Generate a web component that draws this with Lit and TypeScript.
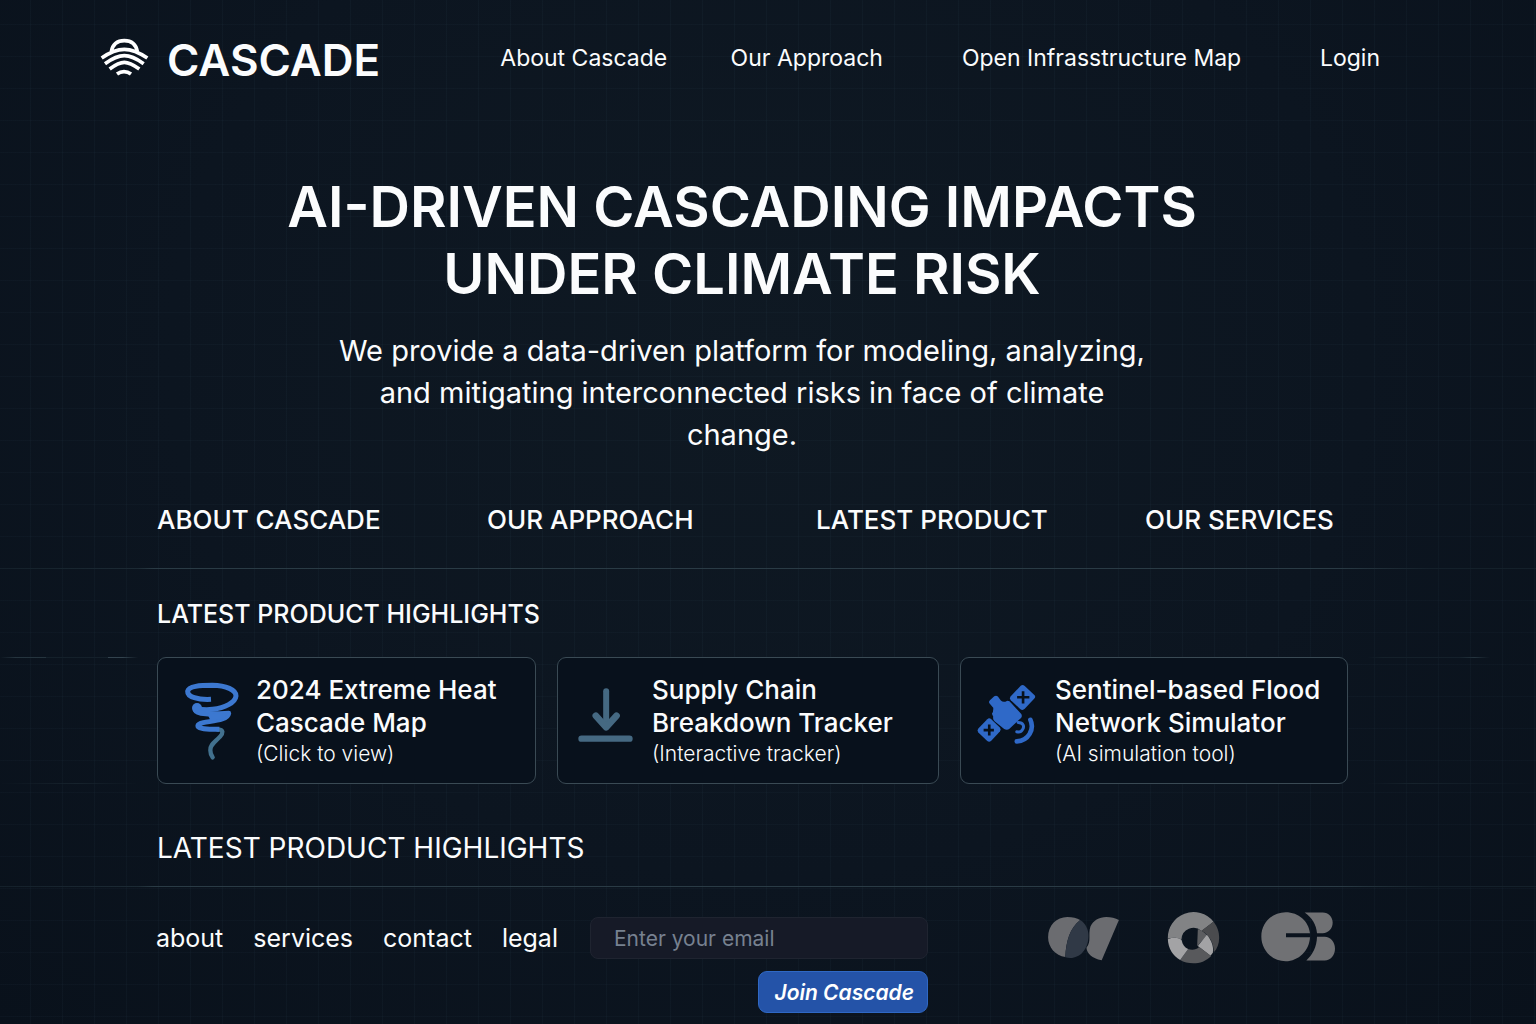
import { LitElement, html, css, svg } from "lit";
import { customElement } from "lit/decorators.js";

const brandMark = svg`
  <svg class="mark" viewBox="60 50 147 138" fill="none" stroke="#fff" stroke-width="11" aria-hidden="true">
    <path d="M94 94 C98 72 113 61 133 61 C153 61 168 72 172 94" />
    <path d="M65 113 C88 97 108 87 133 87 C158 87 178 97 202 113" />
    <path d="M75 130 C96 115 113 106 133 106 C153 106 170 115 191 130" />
    <path d="M89 146 C105 134 118 126 133 126 C148 126 161 134 178 146" />
    <path d="M111 161 C118 156 125 154 132 154 C139 154 146 156 153 161" />
  </svg>`;

const tornado = svg`
  <svg class="tornado" viewBox="70 60 168 240" fill="none" stroke-linejoin="round" aria-hidden="true">
    <path stroke="#42718e" stroke-width="13" stroke-linecap="round" d="M172 206 C190 204 187 218 178 227 C164 243 148 250 149 268 C149 278 152 284 156 289" />
    <g stroke="#3c78d0" stroke-width="15">
      <path d="M151 115 C112 117 80 108 81 91 C84 75 118 73 155 73 C196 74 226 86 226 105 C224 125 192 141 156 145 C136 147 118 145 108 142" />
      <path d="M103 146 C108 161 150 160 204 157 C201 177 160 179 128 185 C107 189 107 199 124 202 C140 206 158 204 176 205" />
    </g>
    <path fill="#3c78d0" d="M140 158 L204 157 L185 174 L150 180 Z" />
    <circle cx="109" cy="141" r="15" fill="#3c78d0" />
  </svg>`;

const download = svg`
  <svg class="download" viewBox="44 52 170 168" fill="none" stroke="#456982" stroke-linecap="round" aria-hidden="true">
    <path stroke-width="18" stroke-linejoin="round" d="M131 65 V170" />
    <path stroke-width="20" stroke-linejoin="round" d="M100 138 L131 173 L162 138" />
    <path stroke-width="19" d="M57 207 H201" />
  </svg>`;

const satellite = svg`
  <svg class="satellite" viewBox="46 42 182 184" fill="#2f69c8" aria-hidden="true">
    <path d="M180 47 Q186 43 192 48 L221 75 Q226 80 221 86 L192 117 Q186 123 179 118 L150 91 Q145 85 150 79 Z" />
    <path d="M79 148 Q85 143 91 148 L117 173 Q122 179 117 185 L91 213 Q85 219 79 214 L52 188 Q47 182 52 176 Z" />
    <path d="M86 101 Q82 96 87 91 L100 79 Q106 75 111 80 L120 92 Q128 99 138 93 Q146 92 151 99 L181 132 Q186 139 180 145 L146 177 Q139 182 130 178 L101 154 Q95 149 97 141 L93 132 Q98 125 97 114 Z" />
    <path d="M172 158 C188 158 192 170 185 180 C181 187 175 188 168 186" fill="none" stroke="#2f69c8" stroke-width="9" stroke-linecap="round" />
    <path d="M209 150 C222 178 204 213 168 215" fill="none" stroke="#2f69c8" stroke-width="14" stroke-linecap="round" />
    <path d="M187 64 V101 M169 82 H206 M85 164 V197 M68 181 H99" stroke="#08111c" stroke-width="8" />
  </svg>`;

const partnerWave = svg`
  <svg class="partner-wave" viewBox="52 44 218 136" role="img" aria-label="Partner one">
    <path fill="#6b6c70" d="M151 56 C120 80 108 120 106 168 C76 164 54 138 54 108 C54 72 80 47 112 47 C128 47 141 50 151 56 Z" />
    <path fill="#303946" d="M151 56 C166 66 176 82 176 104 C176 150 142 180 106 169 C108 120 120 80 151 56 Z" />
    <path fill="#6b6c70" d="M268 56 L216 178 C186 172 172 158 170 140 C186 120 174 100 182 76 C190 58 208 47 230 47 C244 47 257 50 268 56 Z" />
  </svg>`;

const partnerRing = svg`
  <svg class="partner-ring" viewBox="412 36 158 156" role="img" aria-label="Partner two">
    <path fill="#828385" d="M414 116 A77 77 0 0 1 551 65 L515 93 A36 36 0 0 0 455 118 C442 112 428 112 414 116 Z" />
    <path fill="#4a4b4e" d="M551 65 C563 80 568 95 568 114 C568 132 562 146 552 157 C552 130 540 105 515 92 Z" />
    <path fill="#5d5e61" d="M504 87 C515 92 526 98 531 106 L502 139 Z" />
    <path fill="#a3a3a5" d="M531 104 C545 120 552 140 549 158 L542 167 L504 138 Z" />
    <path fill="#58595c" d="M508 141 L544 168 C518 196 475 194 451 180 L475 147 C487 152 500 149 508 141 Z" />
    <path fill="#a3a3a5" d="M414 118 C428 112 442 112 455 119 C458 134 465 143 475 147 L451 180 C429 168 415 145 414 118 Z" />
  </svg>`;

const partnerBlocks = svg`
  <svg class="partner-blocks" viewBox="690 32 228 152" fill="#707174" role="img" aria-label="Partner three">
    <path d="M840 98 H768 V110 H840 C838 150 806 182 767 182 C726 182 694 149 694 108 C694 67 726 35 767 35 C806 35 836 62 840 98 Z" />
    <path d="M824 36 H878 C896 36 908 50 908 66 C908 84 896 98 878 98 H861 C859 72 846 52 824 36 Z" />
    <path d="M861 109 H884 C902 109 915 125 915 144 C915 164 902 180 884 180 H829 C848 162 860 140 861 109 Z" />
  </svg>`;

const products = [
  { icon: tornado, lines: ["2024 Extreme Heat", "Cascade Map"], note: "(Click to view)" },
  { icon: download, lines: ["Supply Chain", "Breakdown Tracker"], note: "(Interactive tracker)" },
  { icon: satellite, lines: ["Sentinel-based Flood", "Network Simulator"], note: "(AI simulation tool)" },
];

@customElement("app-root")
export class AppRoot extends LitElement {
  static styles = css`
    :host {
      display: block;
      min-height: 100vh;
      box-sizing: border-box;
      overflow: hidden;
      color: #fbfcfd;
      font-family: Inter, "Liberation Sans", sans-serif;
      background:
        repeating-linear-gradient(90deg, transparent 0 30px, rgba(100, 150, 175, 0.045) 30px 31px, transparent 31px 32px),
        repeating-linear-gradient(180deg, transparent 0 24px, rgba(100, 150, 175, 0.035) 24px 25px, transparent 25px 32px),
        radial-gradient(ellipse at 50% 35%, #0f1923 0%, #0c1520 55%, #09111b 100%);
    }
    a { color: inherit; text-decoration: none; white-space: nowrap; }
    h1, h2, h3, p { margin: 0; font-weight: 400; }
    svg { display: block; flex: none; }
    .header { display: flex; align-items: center; padding: 32px 156px 0 100px; }
    .brand { display: flex; align-items: center; gap: 18px; font-size: 44px; line-height: 56px; font-weight: 600; }
    .mark { width: 49px; height: 46px; }
    .nav { flex: 1; display: grid; grid-template-columns: 231fr 232fr 359fr 59fr; margin-left: 120px; padding-bottom: 4px; font-size: 23px; line-height: 32px; }
    .hero { padding: 86px 52px 0 0; text-align: center; }
    .title { font-size: 56px; line-height: 67px; font-weight: 600; }
    .lead { max-width: 820px; margin: 22px auto 0; font-size: 29px; line-height: 42px; }
    .main { padding: 0 188px 0 157px; }
    .tabs { display: grid; grid-template-columns: 330fr 329fr 329fr 203fr; margin-top: 48px; font-size: 26px; line-height: 32px; font-weight: 500; }
    .rule { height: 1px; border: 0; margin: 32px 0 0; background: linear-gradient(90deg, #14202a, #1c2a34 9%, #2a3b45 10%, #2a3b45 87%, #14202a 93%); }
    .rule-low { margin-top: 20px; }
    .heading { font-size: 25px; line-height: 32px; font-weight: 500; margin-top: 29px; }
    .cards {
      display: grid;
      grid-template-columns: 379fr 382fr 388fr;
      gap: 21px;
      margin-top: 27px;
      background:
        linear-gradient(90deg, transparent, #25343e 1%, #25343e 3%, #14202a 3% 7%, #33434e 7% 8%, transparent 9% 89%, #14202a 90% 95%, #25343e 96%, transparent 97%) top / 100% 1px no-repeat,
        linear-gradient(90deg, transparent, #16222c 5%, transparent 9% 89%, #16222c 92%, transparent) bottom / 100% 1px no-repeat;
    }
    .card { display: flex; align-items: center; box-sizing: border-box; height: 127px; border: 1px solid #3a4a54; border-radius: 9px; background: #08111c; }
    .art { flex: none; display: flex; justify-content: center; min-width: 94px; }
    .card-title { font-size: 26px; line-height: 33px; font-weight: 500; }
    .note { font-size: 21px; line-height: 30px; font-weight: 300; }
    .tornado { width: 56px; height: 80px; margin: 0 16px 0 26px; }
    .download { width: 57px; height: 56px; margin-bottom: 12px; }
    .satellite { width: 61px; height: 61px; margin: 0 4px 12px 0; }
    .heading-large { font-size: 28px; line-height: 36px; font-weight: 400; margin-top: 46px; }
    .footer { display: flex; align-items: flex-start; padding: 30px 200px 12px 156px; }
    .links { display: flex; gap: 30px; font-size: 25px; line-height: 42px; }
    .signup { display: flex; flex-direction: column; align-items: flex-end; gap: 12px; width: 338px; margin-left: 32px; }
    .email { box-sizing: border-box; width: 100%; height: 42px; padding: 0 23px; border: 1px solid #1f2430; border-radius: 8px; background: #161a27; color: #fff; font: 400 21px Inter, sans-serif; }
    .email::placeholder { color: #778190; opacity: 1; }
    .join { box-sizing: border-box; height: 42px; padding: 0 13px 0 15px; border: 1px solid #2f68c4; border-radius: 9px; background: #2453a8; color: #fff; font: italic 600 21px Inter, sans-serif; }
    .partners { flex: 1; display: flex; align-items: center; justify-content: space-between; margin-left: 119px; height: 42px; }
    .partner-wave { width: 73px; height: 45px; }
    .partner-ring { width: 53px; height: 52px; margin-left: 8px; }
    .partner-blocks { width: 76px; height: 51px; margin-bottom: 4px; }
  `;

  render() {
    return html`
      <header class="header">
        <a class="brand" href="#home">${brandMark}<span>CASCADE</span></a>
        <nav class="nav" aria-label="Primary">
          <a href="#about">About Cascade</a>
          <a href="#approach">Our Approach</a>
          <a href="#map">Open Infrasstructure Map</a>
          <a href="#login">Login</a>
        </nav>
      </header>
      <main>
        <section class="hero">
          <h1 class="title">AI-DRIVEN CASCADING IMPACTS<br />UNDER CLIMATE RISK</h1>
          <p class="lead">We provide a data-driven platform for modeling, analyzing, and mitigating interconnected risks in face of climate change.</p>
        </section>
        <nav class="main tabs" aria-label="Sections">
          <a href="#about">ABOUT CASCADE</a>
          <a href="#approach">OUR APPROACH</a>
          <a href="#product">LATEST PRODUCT</a>
          <a href="#services">OUR SERVICES</a>
        </nav>
        <hr class="rule" />
        <section>
          <h2 class="main heading">LATEST PRODUCT HIGHLIGHTS</h2>
          <div class="main cards">
            ${products.map((p) => html`
              <a class="card" href="#product">
                <span class="art">${p.icon}</span>
                <div>
                  <h3 class="card-title">${p.lines[0]}<br />${p.lines[1]}</h3>
                  <p class="note">${p.note}</p>
                </div>
              </a>`)}
          </div>
        </section>
        <h2 class="main heading heading-large">LATEST PRODUCT HIGHLIGHTS</h2>
        <hr class="rule rule-low" />
      </main>
      <footer class="footer">
        <nav class="links" aria-label="Footer">
          <a href="#about">about</a>
          <a href="#services">services</a>
          <a href="#contact">contact</a>
          <a href="#legal">legal</a>
        </nav>
        <form class="signup">
          <input class="email" type="email" aria-label="Email" placeholder="Enter your email" />
          <button class="join" type="button">Join Cascade</button>
        </form>
        <div class="partners">${partnerWave}${partnerRing}${partnerBlocks}</div>
      </footer>
    `;
  }
}
